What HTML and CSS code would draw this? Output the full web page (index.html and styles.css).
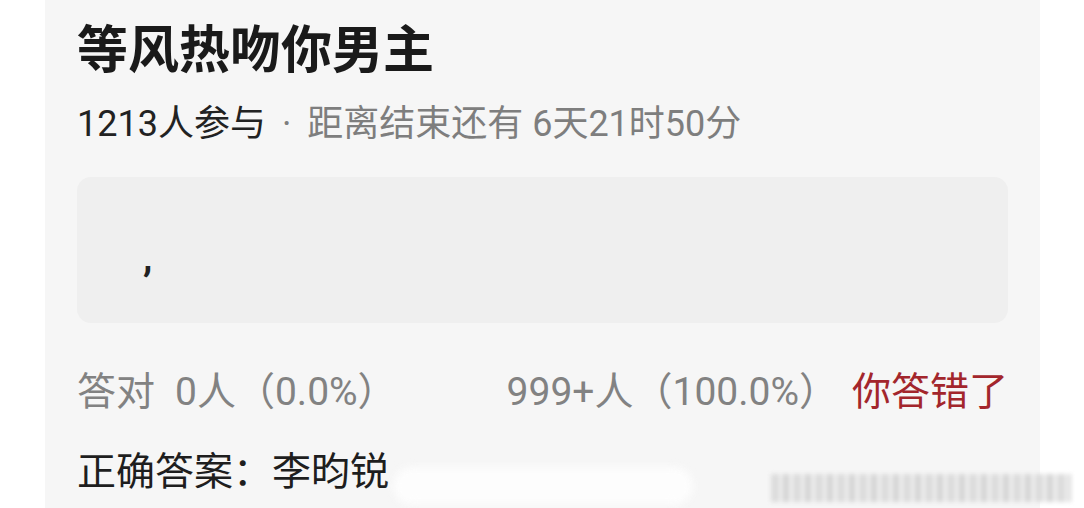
FILE: index.html
```html
<!DOCTYPE html>
<html lang="zh-CN">

<head>
    <meta charset="UTF-8">
    <meta name="viewport" content="width=device-width, initial-scale=1.0">
    <title>等风热吻你男主</title>
    <link rel="stylesheet" href="styles.css">
</head>

<body>

    <!-- Quiz card -->
    <div class="card">
        <h1 class="title">等风热吻你男主</h1>

        <p class="meta">
            <span class="meta-count">1213人参与</span>
            <span class="meta-dot">·</span>
            <span class="meta-time">距离结束还有 6天21时50分</span>
        </p>

        <!-- Question box -->
        <div class="question">
            <span class="question-text">,</span>
        </div>

        <!-- Result stats -->
        <div class="stats">
            <div class="stats-left">
                <span>答对</span>
                <span>0人（0.0%）</span>
            </div>
            <div class="stats-right">
                <span>999+人（100.0%）</span>
                <span class="wrong">你答错了</span>
            </div>
        </div>

        <p class="answer">正确答案：李昀锐</p>

        <!-- Blurred watermark -->
        <div class="watermark">
            <span class="wm-glow"></span>
            <span class="wm-text"></span>
        </div>
    </div>

</body>

</html>
```

FILE: styles.css
```css
/* General Reset */
* {
    margin: 0;
    padding: 0;
    box-sizing: border-box;
}

body {
    font-family: Roboto, "Noto Sans CJK SC", sans-serif;
    background-color: #fff;
    color: #1c1c1c;
    overflow: hidden;
}

/* Card */
.card {
    position: relative;
    width: 995px;
    height: 508px;
    margin-left: 45px;
    padding: 25px 32px 0;
    background-color: #f6f6f6;
}

.title {
    font-size: 51px;
    line-height: 51px;
    font-weight: 700;
    color: #1a1a1a;
}

/* Meta line */
.meta {
    margin-top: 30px;
    font-size: 36px;
    line-height: 36px;
    color: #7e7e7e;
}

.meta-count {
    color: #222;
}

.meta-dot {
    margin: 0 7px;
}

/* Question box */
.question {
    display: flex;
    align-items: center;
    height: 146px;
    margin-top: 35px;
    padding: 16px 0 0 66px;
    background-color: #efefef;
    border-radius: 14px;
}

.question-text {
    font-size: 38px;
    color: #222;
    font-weight: 700;
}

/* Stats */
.stats {
    display: flex;
    justify-content: space-between;
    margin-top: 50px;
    font-size: 39px;
    line-height: 39px;
    color: #828282;
}

.stats-left,
.stats-right {
    display: flex;
    gap: 20px;
}

.stats-right {
    gap: 14px;
}

.wrong {
    color: #a3262c;
}

/* Answer */
.answer {
    margin-top: 41px;
    font-size: 39px;
    line-height: 39px;
    color: #1e1e1e;
}

/* Watermark */
.watermark {
    position: absolute;
    left: 346px;
    top: 464px;
    width: 680px;
    height: 44px;
}

.wm-glow {
    position: absolute;
    left: 2px;
    top: 3px;
    width: 300px;
    height: 38px;
    background-color: #fdfdfd;
    border-radius: 20px;
    filter: blur(4px);
}

.wm-text {
    position: absolute;
    left: 380px;
    top: 10px;
    width: 300px;
    height: 28px;
    background: repeating-linear-gradient(90deg, #dcdcdc 0 8px, #ededed 8px 12px, #d4d4d4 12px 18px, #f0f0f0 18px 22px);
    filter: blur(2px);
}
```
